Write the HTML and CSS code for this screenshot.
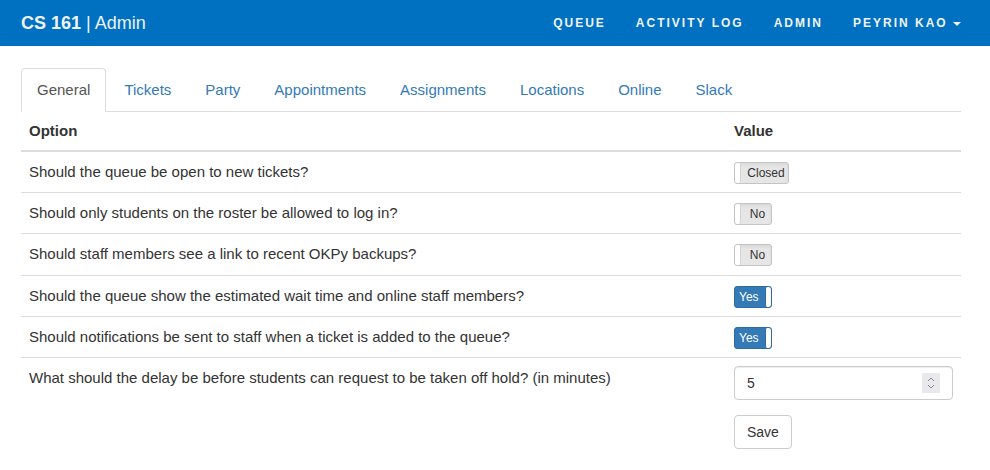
FILE: index.html
```html
<!DOCTYPE html>
<html lang="en">
<head>
    <meta charset="UTF-8">
    <title>CS 161 | Admin</title>
    <link rel="stylesheet" href="styles.css">
</head>
<body>

    <nav class="navbar">
        <div class="container navbar-inner">
            <a class="brand" href="#"><strong>CS 161</strong> | Admin</a>
            <ul class="nav-right">
                <li><a href="#">Queue</a></li>
                <li><a href="#">Activity Log</a></li>
                <li><a href="#">Admin</a></li>
                <li><a href="#">Peyrin Kao <span class="caret"></span></a></li>
            </ul>
        </div>
    </nav>

    <div class="container">
        <ul class="nav-tabs">
            <li class="active"><a href="#">General</a></li>
            <li><a href="#">Tickets</a></li>
            <li><a href="#">Party</a></li>
            <li><a href="#">Appointments</a></li>
            <li><a href="#">Assignments</a></li>
            <li><a href="#">Locations</a></li>
            <li><a href="#">Online</a></li>
            <li><a href="#">Slack</a></li>
        </ul>

        <table class="table">
            <thead>
                <tr>
                    <th>Option</th>
                    <th class="col-value">Value</th>
                </tr>
            </thead>
            <tbody>
                <tr>
                    <td>Should the queue be open to new tickets?</td>
                    <td><span class="toggle off wide"><span class="handle"></span><span class="label">Closed</span></span></td>
                </tr>
                <tr>
                    <td>Should only students on the roster be allowed to log in?</td>
                    <td><span class="toggle off"><span class="handle"></span><span class="label">No</span></span></td>
                </tr>
                <tr>
                    <td>Should staff members see a link to recent OKPy backups?</td>
                    <td><span class="toggle off"><span class="handle"></span><span class="label">No</span></span></td>
                </tr>
                <tr>
                    <td>Should the queue show the estimated wait time and online staff members?</td>
                    <td><span class="toggle on"><span class="label">Yes</span><span class="handle"></span></span></td>
                </tr>
                <tr>
                    <td>Should notifications be sent to staff when a ticket is added to the queue?</td>
                    <td><span class="toggle on"><span class="label">Yes</span><span class="handle"></span></span></td>
                </tr>
                <tr class="row-top">
                    <td>What should the delay be before students can request to be taken off hold? (in minutes)</td>
                    <td>
                        <div class="number-field">
                            <input type="text" class="form-control" value="5">
                            <span class="spinner">
                                <svg width="10" height="14" viewBox="0 0 10 14">
                                    <path d="M2 5 L5 2 L8 5" fill="none" stroke="#8a8a8a" stroke-width="1"/>
                                    <path d="M2 9 L5 12 L8 9" fill="none" stroke="#8a8a8a" stroke-width="1"/>
                                </svg>
                            </span>
                        </div>
                        <button class="btn">Save</button>
                    </td>
                </tr>
            </tbody>
        </table>
    </div>

</body>
</html>
```

FILE: styles.css
```css
body {
    margin: 0;
    font-family: "Liberation Sans", Arial, sans-serif;
    font-size: 15px;
    line-height: 1.42857;
    color: #333;
    background-color: #fff;
}
a {
    text-decoration: none;
}
ul {
    list-style: none;
    margin: 0;
    padding: 0;
}
.container {
    width: 940px;
    margin-left: 21px;
}

/* navbar */
.navbar {
    background-color: #0070c0;
    height: 46px;
    margin-bottom: 22px;
}
.navbar-inner {
    display: flex;
    justify-content: space-between;
    align-items: center;
    height: 46px;
}
.brand {
    color: #eef3f8;
    font-size: 18px;
    line-height: 20px;
}
.nav-right {
    display: flex;
    margin-right: -15px;
}
.nav-right a {
    display: block;
    padding: 13px 15px;
    color: #eef3f8;
    font-size: 12px;
    line-height: 20px;
    font-weight: bold;
    letter-spacing: 2px;
    text-transform: uppercase;
}
.caret {
    display: inline-block;
    width: 0;
    height: 0;
    vertical-align: middle;
    border-top: 4px solid #eef3f8;
    border-left: 4px solid transparent;
    border-right: 4px solid transparent;
}

/* tabs */
.nav-tabs {
    display: flex;
    border-bottom: 1px solid #ddd;
}
.nav-tabs li {
    margin-right: 2px;
    margin-bottom: -1px;
}
.nav-tabs a {
    display: block;
    padding: 10px 15px 11px;
    color: #337ab7;
    border: 1px solid transparent;
    border-radius: 4px 4px 0 0;
}
.nav-tabs .active a {
    color: #555;
    background-color: #fff;
    border-color: #ddd;
    border-bottom-color: transparent;
}

/* table */
.table {
    width: 100%;
    border-collapse: collapse;
}
.table th {
    text-align: left;
    padding: 8px;
    border-bottom: 2px solid #ddd;
}
.table td {
    padding: 8px;
    line-height: 24.3px;
    border-top: 1px solid #ddd;
    vertical-align: middle;
}
.table .col-value {
    width: 219px;
}
.row-top td {
    vertical-align: top;
}

/* toggles */
.toggle {
    display: inline-flex;
    align-items: stretch;
    vertical-align: middle;
    box-sizing: border-box;
    width: 38px;
    height: 22px;
    border: 1px solid #c4c4c4;
    border-radius: 3px;
    overflow: hidden;
    font-size: 12px;
    line-height: 20px;
}
.toggle.wide {
    width: 55px;
}
.toggle .handle {
    width: 5px;
    background-color: #fff;
    border-right: 1px solid #d4d4d4;
    border-radius: 2px;
}
.toggle .label {
    flex-grow: 1;
    text-align: center;
}
.toggle.off {
    background-color: #e6e6e6;
    box-shadow: inset 0 2px 3px rgba(0, 0, 0, 0.06);
}
.toggle.off .label {
    color: #333;
    padding-left: 3px;
}
.toggle.on {
    background-color: #337ab7;
    border-color: #2e6da4;
}
.toggle.on .label {
    color: #fff;
    text-align: left;
    padding-left: 4px;
}
.toggle.on .handle {
    border-right: none;
    border-left: 1px solid #2e6da4;
    width: 5px;
}

/* form */
.number-field {
    position: relative;
    margin-bottom: 15px;
}
.form-control {
    display: block;
    box-sizing: border-box;
    width: 100%;
    height: 34px;
    padding: 6px 12px;
    font-family: inherit;
    font-size: 14px;
    color: #333;
    border: 1px solid #ccc;
    border-radius: 4px;
    box-shadow: inset 0 1px 1px rgba(0, 0, 0, 0.075);
}
.spinner {
    position: absolute;
    right: 13px;
    top: 7px;
    width: 18px;
    height: 20px;
    background-color: #e9e9ed;
    display: flex;
    align-items: center;
    justify-content: center;
}
.btn {
    display: block;
    height: 34px;
    padding: 6px 12px;
    font-family: inherit;
    font-size: 14px;
    color: #333;
    background-color: #fff;
    border: 1px solid #ccc;
    border-radius: 4px;
}
```
